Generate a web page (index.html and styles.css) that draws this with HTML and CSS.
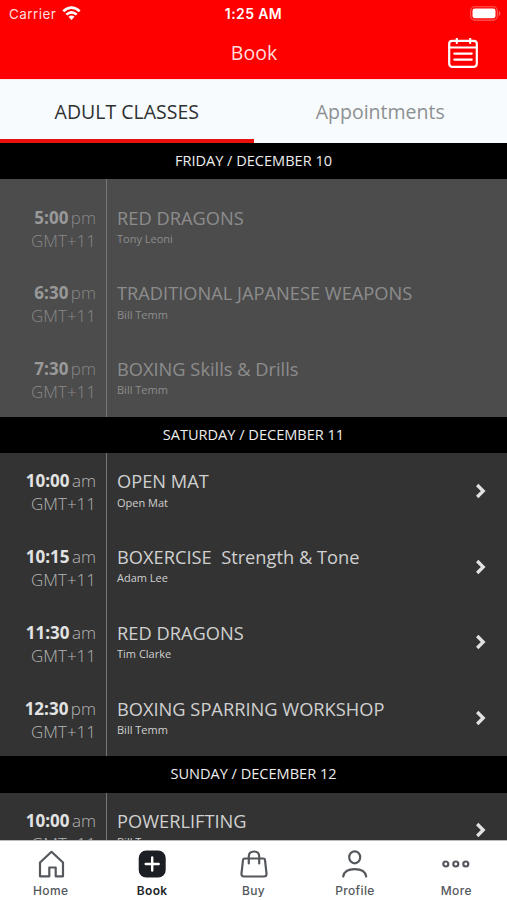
FILE: index.html
```html
<!DOCTYPE html>
<html lang="en">
<head>
<meta charset="utf-8">
<title>Book</title>
<link rel="stylesheet" href="styles.css">
</head>
<body>
<div class="app">
  <header class="top">
    <div class="status">
      <div class="carrier"><span>Carrier</span>
        <svg width="19" height="15" viewBox="0 0 19 15" fill="none" stroke="#fff" stroke-width="2.6"><path d="M1.3 5.3Q9.500-2 17.700 5.300M4.300 8.600Q9.500 4 14.700 8.600"/><path d="M6.500 10.800Q9.500 8.300 12.500 10.800L9.500 14z" fill="#fff" stroke="none"/></svg>
      </div>
      <span class="clock">1:25 AM</span>
      <svg class="battery" width="31" height="15" viewBox="0 0 31 15"><rect x=".7" y=".7" width="26.600" height="13.400" rx="4" fill="none" stroke="#ff5a5a" stroke-width="1.100"/><rect x="2.500" y="2.500" width="23" height="9.800" rx="2.200" fill="#fff"/><path d="M28.800 5v5q1.600-.8 1.600-2.500t-1.600-2.500z" fill="#ff6060"/></svg>
    </div>
    <div class="nav">
      <h1>Book</h1>
      <svg class="calendar" width="30" height="30" viewBox="0 0 30 30" fill="none" stroke="#fff" stroke-width="2.200" stroke-linecap="round"><rect x="1.200" y="2.800" width="27.600" height="26" rx="3"/><path d="M1.500 9.500h27M8.800.8v4.200M22.200.8v4.200M6.300 15.600h17.500M6.300 21.600h17.500"/></svg>
    </div>
  </header>
  <nav class="tabs"><span class="tab active">ADULT CLASSES</span><span class="tab">Appointments</span></nav>
  <main class="schedule">
    <h2 class="day">FRIDAY / DECEMBER 10</h2>
    <section class="classes past">
      <div class="row"><div class="time"><p><b>5:00</b><i>pm</i></p><p class="zone">GMT+11</p></div><div class="info"><h3>RED DRAGONS</h3><p>Tony Leoni</p></div></div>
      <div class="row"><div class="time"><p><b>6:30</b><i>pm</i></p><p class="zone">GMT+11</p></div><div class="info"><h3>TRADITIONAL JAPANESE WEAPONS</h3><p>Bill Temm</p></div></div>
      <div class="row"><div class="time"><p><b>7:30</b><i>pm</i></p><p class="zone">GMT+11</p></div><div class="info"><h3>BOXING Skills &amp; Drills</h3><p>Bill Temm</p></div></div>
    </section>
    <h2 class="day">SATURDAY / DECEMBER 11</h2>
    <section class="classes">
      <div class="row"><div class="time"><p><b>10:00</b><i>am</i></p><p class="zone">GMT+11</p></div><div class="info"><h3>OPEN MAT</h3><p>Open Mat</p></div><svg class="chevron" viewBox="0 0 12 16"><path d="M2.200 2l6 6-6 6"/></svg></div>
      <div class="row"><div class="time"><p><b>10:15</b><i>am</i></p><p class="zone">GMT+11</p></div><div class="info"><h3>BOXERCISE&nbsp; Strength &amp; Tone</h3><p>Adam Lee</p></div><svg class="chevron" viewBox="0 0 12 16"><path d="M2.200 2l6 6-6 6"/></svg></div>
      <div class="row"><div class="time"><p><b>11:30</b><i>am</i></p><p class="zone">GMT+11</p></div><div class="info"><h3>RED DRAGONS</h3><p>Tim Clarke</p></div><svg class="chevron" viewBox="0 0 12 16"><path d="M2.200 2l6 6-6 6"/></svg></div>
      <div class="row"><div class="time"><p><b>12:30</b><i>pm</i></p><p class="zone">GMT+11</p></div><div class="info"><h3>BOXING SPARRING WORKSHOP</h3><p>Bill Temm</p></div><svg class="chevron" viewBox="0 0 12 16"><path d="M2.200 2l6 6-6 6"/></svg></div>
    </section>
    <h2 class="day">SUNDAY / DECEMBER 12</h2>
    <section class="classes">
      <div class="row"><div class="time"><p><b>10:00</b><i>am</i></p><p class="zone">GMT+11</p></div><div class="info"><h3>POWERLIFTING</h3><p>Bill Temm</p></div><svg class="chevron" viewBox="0 0 12 16"><path d="M2.200 2l6 6-6 6"/></svg></div>
    </section>
  </main>
  <footer class="bar">
    <div class="item"><svg viewBox="0 0 28 28"><path d="M3 26.300V12.500L14.500 1.800 26 12.500v13.800h-7.300V17.500h-6.400v8.800z"/></svg><span>Home</span></div>
    <div class="item on"><svg viewBox="0 0 28 28"><rect x=".7" y=".5" width="27" height="27" rx="7.500" fill="#1b1e22" stroke="none"/><path d="M14.200 7.500v13M7.700 14h13" stroke="#fff" stroke-width="2.400"/></svg><span>Book</span></div>
    <div class="item"><svg viewBox="0 0 28 28"><path d="M4.700 8.500h18.600q1.500 0 1.700 1.500l1.500 13.500q.3 3-2.500 3H4q-2.800 0-2.500-3L3 10q.2-1.500 1.700-1.500zM8.800 13.500V6.500Q8.800 1.500 14 1.500t5.200 5v7"/></svg><span>Buy</span></div>
    <div class="item"><svg viewBox="0 0 28 28"><ellipse cx="13.700" cy="7.300" rx="5.500" ry="6"/><path d="M2.200 26.500C3.200 21 7.500 19.200 13.700 19.200S24.200 21 25.200 26.500"/></svg><span>Profile</span></div>
    <div class="item"><svg viewBox="0 0 28 28"><circle cx="3.800" cy="14" r="2.500"/><circle cx="13.800" cy="14" r="2.500"/><circle cx="23.800" cy="14" r="2.500"/></svg><span>More</span></div>
  </footer>
</div>
</body>
</html>
```
FILE: styles.css
```css
* { box-sizing: border-box; margin: 0; padding: 0; }
body { font-family: "Open Sans", "Noto Sans", sans-serif; background: #333; }
h1, h2, h3 { font-weight: 400; }
.app { width: 507px; height: 900px; display: flex; flex-direction: column; overflow: hidden; }
.top { flex: none; height: 79px; background: #f00; color: #ffdede; }
.status { height: 27px; display: grid; grid-template-columns: 1fr auto 1fr; align-items: center; padding: 0 6px 0 9px; font-family: Inter, sans-serif; font-size: 13.500px; }
.carrier { display: flex; align-items: center; gap: 5.500px; letter-spacing: .45px; }
.clock { font-weight: 600; color: #fff; letter-spacing: .4px; font-size: 14px; margin-right: 3px; }
.battery { justify-self: end; }
.nav { height: 52px; display: grid; grid-template-columns: 1fr auto 1fr; align-items: center; padding: 0 29px 0 30px; }
.nav h1 { grid-column: 2; font-size: 19.500px; line-height: 52px; }
.calendar { justify-self: end; }
.tabs { flex: none; height: 63.700px; display: flex; background: #f8fbfd; border-top: 1px solid #fde6e6; }
.tab { width: 50%; text-align: center; font-size: 19.500px; line-height: 63px; color: #8d9092; border-bottom: 4px solid transparent; height: 62.700px; }
.tab.active { color: #2e3032; border-color: #e8100c; }
.schedule { flex: 1; min-height: 0; overflow: hidden; }
.day { height: 36.500px; background: #000; color: #eee; text-align: center; font-size: 14.550px; line-height: 35.500px; }
.classes { background: linear-gradient(90deg, transparent 106px, #777 106px, #777 107.500px, transparent 107.500px), #333; color: #d0d0d0; }
.past { padding-top: 10.500px; background-color: #4c4c4c; color: #8c8c8c; }
.row { height: 75.750px; display: flex; padding-top: 16px; }
.time { width: 96px; text-align: right; font-size: 17px; line-height: 23px; }
.time b { font-weight: 700; color: #e2e2e2; }
.time i { font-style: normal; font-weight: 300; margin-left: 2.500px; color: #b5b5b5; }
.zone { font-weight: 300; color: #b5b5b5; }
.past b { color: #999; }
.past i, .past .zone { color: #888; }
.info { flex: 1; padding-left: 21px; }
.info h3 { font-size: 18.250px; line-height: 23px; white-space: nowrap; }
.info p { font-size: 11px; line-height: 18px; margin-top: 1.300px; }
.chevron { width: 12px; height: 16px; margin: 13.500px 20px 0 0; fill: none; stroke: #e2e2e2; stroke-width: 3.300; }
.bar { flex: none; height: 60px; display: flex; background: #fff; border-top: 1px solid #bbb; }
.item { flex: 1; display: flex; flex-direction: column; align-items: center; padding-top: 9px; color: #54585c; font-family: Inter, sans-serif; font-size: 12px; font-weight: 500; letter-spacing: .35px; }
.item svg { width: 28px; height: 28px; fill: none; stroke: #54585c; stroke-width: 2.200; stroke-linejoin: round; stroke-linecap: round; }
.item span { line-height: 16px; margin-top: 5px; }
.on { color: #222529; font-weight: 600; }
```
